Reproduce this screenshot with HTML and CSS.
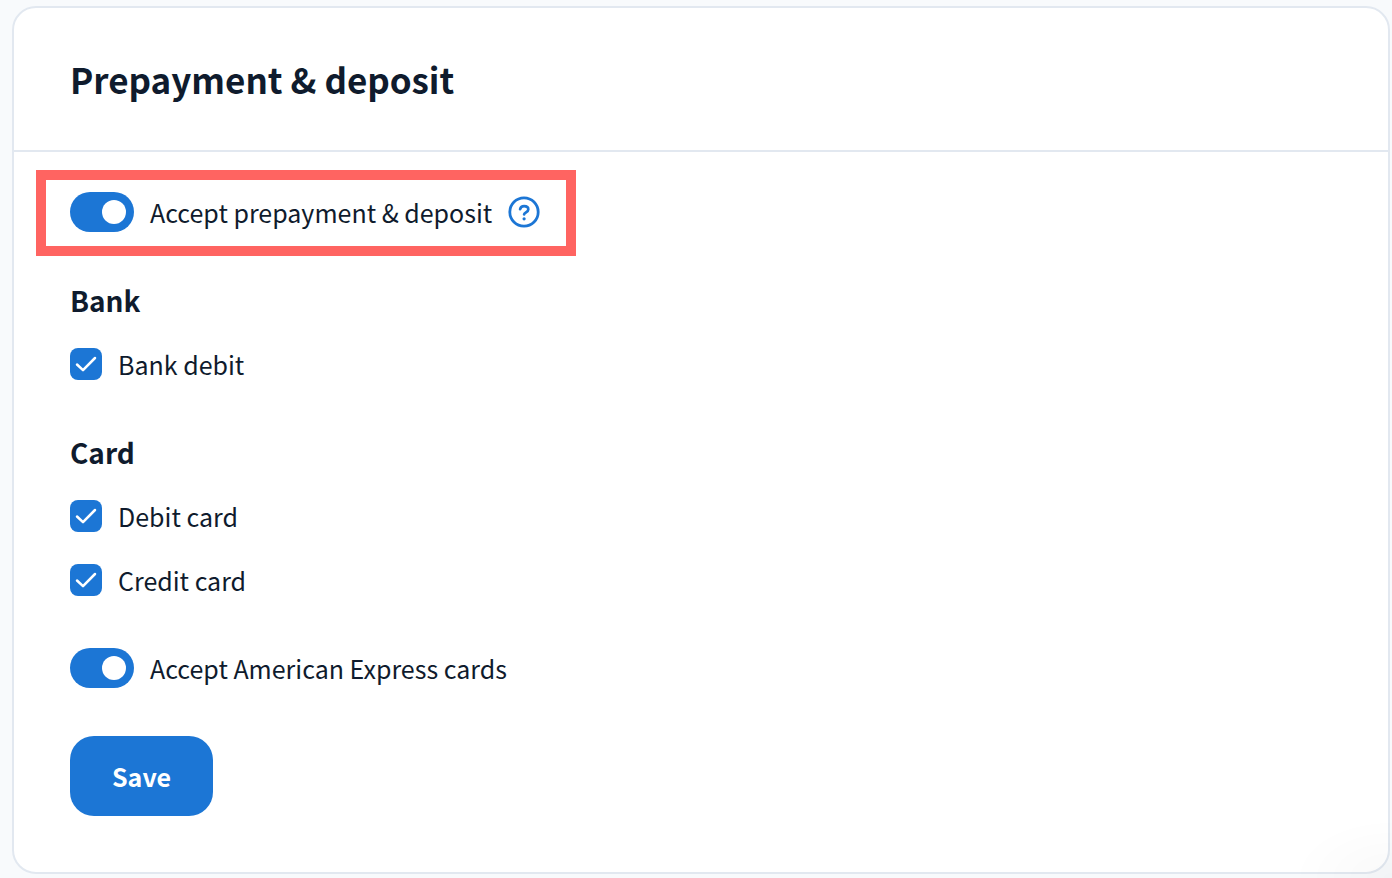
FILE: index.html
```html
<!DOCTYPE html>
<html lang="en">
<head>
    <meta charset="UTF-8">
    <meta name="viewport" content="width=device-width, initial-scale=1.0">
    <title>Prepayment &amp; deposit</title>
    <link rel="stylesheet" href="styles.css">
</head>
<body>
    <main class="card">
        <div class="card-header">
            <h1>Prepayment &amp; deposit</h1>
        </div>

        <form class="card-body">
            <div class="highlight">
                <label class="option">
                    <input type="checkbox" role="switch" class="toggle" checked>
                    Accept prepayment &amp; deposit
                </label>
                <button type="button" class="help" aria-label="Help">
                    <svg viewBox="0 0 32 32" width="32" height="32" fill="none" stroke="currentColor" stroke-linecap="round" stroke-linejoin="round">
                        <circle cx="16" cy="16" r="14.2" stroke-width="2.8"/>
                        <path d="M12.1 13.2c.5-2.1 2.1-3.1 4-3.1 2.4 0 4.2 1.3 4.2 3.3 0 2.6-4 3-4.2 5" stroke-width="2.7"/>
                        <circle cx="16.1" cy="22.8" r="1.6" fill="currentColor" stroke="none"/>
                    </svg>
                </button>
            </div>

            <section class="group">
                <h2>Bank</h2>
                <label class="option"><input type="checkbox" class="check" checked>Bank debit</label>
            </section>

            <section class="group">
                <h2>Card</h2>
                <label class="option"><input type="checkbox" class="check" checked>Debit card</label>
                <label class="option"><input type="checkbox" class="check" checked>Credit card</label>
            </section>

            <label class="option">
                <input type="checkbox" role="switch" class="toggle" checked>
                Accept American Express cards
            </label>

            <button type="submit" class="save-button">Save</button>
        </form>
    </main>
    <div class="corner-shadow"></div>
</body>
</html>
```
FILE: styles.css
```css
body {
    margin: 0;
    padding: 6px 2px 4px 12px;
    background: #f8fafc;
    color: #0f1b2d;
    font-family: "Source Sans Pro", "Noto Sans CJK SC", "Noto Sans", sans-serif;
    font-size: 25px;
    line-height: 40px;
}
.card {
    background: white;
    border: 2px solid #e2e8f0;
    border-radius: 24px;
}
.card-header {
    padding: 47px 56px;
    border-bottom: 2px solid #e2e8f0;
}
h1 {
    margin: 0;
    font-size: 35px;
    line-height: 48px;
    font-weight: bold;
}
h2 {
    margin: 0;
    font-size: 28px;
    line-height: 40px;
    font-weight: bold;
}
.card-body {
    display: flex;
    flex-direction: column;
    align-items: flex-start;
    gap: 48px;
    padding: 18px 56px 56px;
}
.highlight {
    display: flex;
    align-items: center;
    gap: 16px;
    margin: 0 0 -24px -34px;
    padding: 12px 26px 14px 24px;
    border: 10px solid #ff6461;
}
.group {
    display: flex;
    flex-direction: column;
    align-items: flex-start;
    gap: 24px;
}
.option {
    display: flex;
    align-items: center;
    gap: 16px;
    cursor: pointer;
}
.toggle,
.check {
    appearance: none;
    flex: none;
    margin: 0;
    background: #cbd5e1;
    cursor: pointer;
}
.toggle {
    display: flex;
    align-items: center;
    box-sizing: border-box;
    width: 64px;
    height: 40px;
    padding: 8px;
    border-radius: 20px;
}
.toggle::before {
    content: "";
    width: 24px;
    height: 24px;
    border-radius: 50%;
    background: white;
}
.toggle:checked {
    justify-content: flex-end;
    background: #1c76d5;
}
.check {
    width: 32px;
    height: 32px;
    border-radius: 8px;
}
.check:checked {
    background: #1c76d5 url("data:image/svg+xml,%3Csvg xmlns='http://www.w3.org/2000/svg' viewBox='0 0 32 32' fill='none' stroke='white' stroke-width='2.5' stroke-linecap='round' stroke-linejoin='round'%3E%3Cpath d='M7 16.5l6 5.7L25 10'/%3E%3C/svg%3E") center / 32px no-repeat;
}
.help {
    display: flex;
    padding: 0;
    border: none;
    background: none;
    color: #1c76d5;
    cursor: pointer;
}
.save-button {
    padding: 20px 42px;
    border: none;
    border-radius: 24px;
    background: #1c76d5;
    color: white;
    font: inherit;
    font-weight: bold;
    cursor: pointer;
}
.save-button:hover {
    background: #1766ba;
}
.corner-shadow {
    position: fixed;
    right: 0;
    bottom: 0;
    width: 100px;
    height: 60px;
    background: radial-gradient(farthest-side at bottom right, rgba(0,0,0,0.025), transparent);
    pointer-events: none;
}
```
